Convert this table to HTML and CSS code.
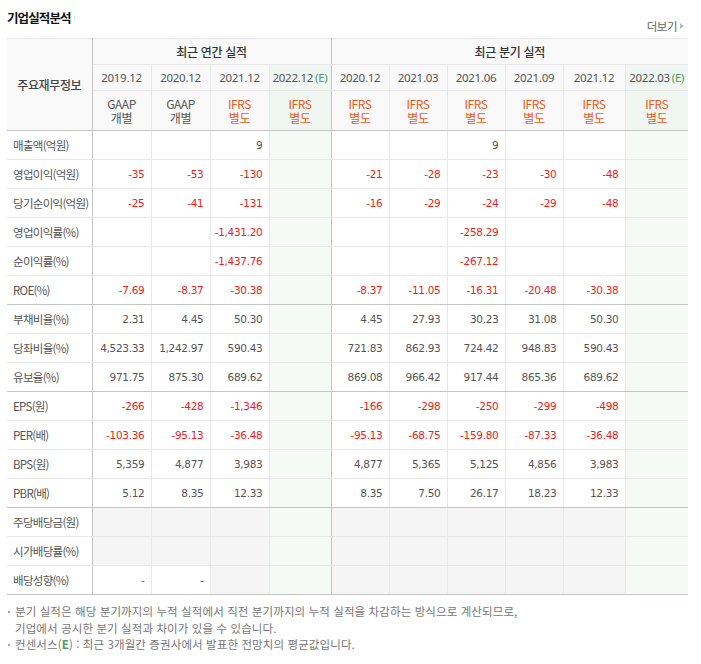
FILE: index.html
```html
<!DOCTYPE html>
<html lang="ko">
<head>
<meta charset="utf-8">
<link rel="stylesheet" href="styles.css">
</head>
<body>
<div class="wrap">
  <div class="top">
    <h2 class="title">기업실적분석<span class="bar"></span></h2>
    <a class="more">더보기<span class="tri"></span></a>
  </div>
  <table class="fin">
    <colgroup>
      <col class="w-label"><col class="w59"><col class="w59"><col class="w59"><col class="w62">
      <col class="w58"><col class="w58"><col class="w58"><col class="w58"><col class="w62"><col class="w63">
    </colgroup>
    <thead>
      <tr class="h1">
        <th rowspan="3" class="lab-h dr">주요재무정보</th>
        <th colspan="4" class="grp dr">최근 연간 실적</th>
        <th colspan="6" class="grp">최근 분기 실적</th>
      </tr>
      <tr class="h2">
        <th>2019.12</th><th>2020.12</th><th>2021.12</th><th class="est dr">2022.12<em>(E)</em></th>
        <th>2020.12</th><th>2021.03</th><th>2021.06</th><th>2021.09</th><th>2021.12</th><th class="est">2022.03<em>(E)</em></th>
      </tr>
      <tr class="h3">
        <th><span class="l">GAAP</span><span class="l">개별</span></th>
        <th><span class="l">GAAP</span><span class="l">개별</span></th>
        <th class="ifrs"><span class="l">IFRS</span><span class="l">별도</span></th>
        <th class="ifrs est dr"><span class="l">IFRS</span><span class="l">별도</span></th>
        <th class="ifrs"><span class="l">IFRS</span><span class="l">별도</span></th>
        <th class="ifrs"><span class="l">IFRS</span><span class="l">별도</span></th>
        <th class="ifrs"><span class="l">IFRS</span><span class="l">별도</span></th>
        <th class="ifrs"><span class="l">IFRS</span><span class="l">별도</span></th>
        <th class="ifrs"><span class="l">IFRS</span><span class="l">별도</span></th>
        <th class="ifrs est"><span class="l">IFRS</span><span class="l">별도</span></th>
      </tr>
    </thead>
    <tbody>
      <tr><th>매출액(억원)</th><td></td><td></td><td>9</td><td class="est dr"></td><td></td><td></td><td>9</td><td></td><td></td><td class="est"></td></tr>
      <tr><th>영업이익(억원)</th><td class="neg">-35</td><td class="neg">-53</td><td class="neg">-130</td><td class="est dr"></td><td class="neg">-21</td><td class="neg">-28</td><td class="neg">-23</td><td class="neg">-30</td><td class="neg">-48</td><td class="est"></td></tr>
      <tr><th>당기순이익(억원)</th><td class="neg">-25</td><td class="neg">-41</td><td class="neg">-131</td><td class="est dr"></td><td class="neg">-16</td><td class="neg">-29</td><td class="neg">-24</td><td class="neg">-29</td><td class="neg">-48</td><td class="est"></td></tr>
      <tr><th>영업이익률(%)</th><td></td><td></td><td class="neg">-1,431.20</td><td class="est dr"></td><td></td><td></td><td class="neg">-258.29</td><td></td><td></td><td class="est"></td></tr>
      <tr><th>순이익률(%)</th><td></td><td></td><td class="neg">-1,437.76</td><td class="est dr"></td><td></td><td></td><td class="neg">-267.12</td><td></td><td></td><td class="est"></td></tr>
      <tr class="end"><th>ROE(%)</th><td class="neg">-7.69</td><td class="neg">-8.37</td><td class="neg">-30.38</td><td class="est dr"></td><td class="neg">-8.37</td><td class="neg">-11.05</td><td class="neg">-16.31</td><td class="neg">-20.48</td><td class="neg">-30.38</td><td class="est"></td></tr>
      <tr><th>부채비율(%)</th><td>2.31</td><td>4.45</td><td>50.30</td><td class="est dr"></td><td>4.45</td><td>27.93</td><td>30.23</td><td>31.08</td><td>50.30</td><td class="est"></td></tr>
      <tr><th>당좌비율(%)</th><td>4,523.33</td><td>1,242.97</td><td>590.43</td><td class="est dr"></td><td>721.83</td><td>862.93</td><td>724.42</td><td>948.83</td><td>590.43</td><td class="est"></td></tr>
      <tr class="end"><th>유보율(%)</th><td>971.75</td><td>875.30</td><td>689.62</td><td class="est dr"></td><td>869.08</td><td>966.42</td><td>917.44</td><td>865.36</td><td>689.62</td><td class="est"></td></tr>
      <tr><th>EPS(원)</th><td class="neg">-266</td><td class="neg">-428</td><td class="neg">-1,346</td><td class="est dr"></td><td class="neg">-166</td><td class="neg">-298</td><td class="neg">-250</td><td class="neg">-299</td><td class="neg">-498</td><td class="est"></td></tr>
      <tr><th>PER(배)</th><td class="neg">-103.36</td><td class="neg">-95.13</td><td class="neg">-36.48</td><td class="est dr"></td><td class="neg">-95.13</td><td class="neg">-68.75</td><td class="neg">-159.80</td><td class="neg">-87.33</td><td class="neg">-36.48</td><td class="est"></td></tr>
      <tr><th>BPS(원)</th><td>5,359</td><td>4,877</td><td>3,983</td><td class="est dr"></td><td>4,877</td><td>5,365</td><td>5,125</td><td>4,856</td><td>3,983</td><td class="est"></td></tr>
      <tr class="end"><th>PBR(배)</th><td>5.12</td><td>8.35</td><td>12.33</td><td class="est dr"></td><td>8.35</td><td>7.50</td><td>26.17</td><td>18.23</td><td>12.33</td><td class="est"></td></tr>
      <tr class="div"><th>주당배당금(원)</th><td></td><td></td><td></td><td class="est dr"></td><td></td><td></td><td></td><td></td><td></td><td class="est"></td></tr>
      <tr class="div"><th>시가배당률(%)</th><td></td><td></td><td></td><td class="est dr"></td><td></td><td></td><td></td><td></td><td></td><td class="est"></td></tr>
      <tr class="div end"><th>배당성향(%)</th><td class="wh">-</td><td class="wh">-</td><td></td><td class="est dr"></td><td></td><td></td><td></td><td></td><td></td><td class="est"></td></tr>
    </tbody>
  </table>
  <ul class="notes">
    <li>분기 실적은 해당 분기까지의 누적 실적에서 직전 분기까지의 누적 실적을 차감하는 방식으로 계산되므로,<br>기업에서 공시한 분기 실적과 차이가 있을 수 있습니다.</li>
    <li>컨센서스(<b>E</b>) : 최근 3개월간 증권사에서 발표한 전망치의 평균값입니다.</li>
  </ul>
</div>
</body>
</html>
```
FILE: styles.css
```css
* { box-sizing: border-box; }
body { margin: 0; background: #fff; font-family: "Noto Sans CJK KR", "Noto Sans", sans-serif; color: #333; }
.wrap { padding: 0 13px 0 7px; width: 701px; }
.top { display: flex; justify-content: space-between; align-items: flex-end; height: 38px; padding-bottom: 5px; }
.title { margin: 0 0 7px 0; font-size: 12.5px; font-weight: 700; color: #111; letter-spacing: -0.9px; display: flex; align-items: center; line-height: 16px; }
.title .bar { display: inline-block; width: 1px; height: 7px; background: #e4e4e4; margin-left: 3px; }
.more { font-size: 11.5px; color: #666; letter-spacing: -0.5px; display: flex; align-items: center; line-height: 14px; margin-right: 4px; }
.more .tri { display: inline-block; width: 0; height: 0; border-left: 4px solid #bbb; border-top: 3px solid transparent; border-bottom: 3px solid transparent; margin-left: 3px; }

.fin { border-collapse: collapse; table-layout: fixed; width: 681px; border-top: 1px solid #c4c4c4; border-bottom: 1px solid #c4c4c4; }
.w-label { width: 85px; }
.w59 { width: 59px; }
.w62 { width: 62px; }
.w58 { width: 58px; }
.w63 { width: 63px; }

.fin th, .fin td { border: 1px solid #e8e8e8; padding: 0; font-weight: 400; }
.fin tr > :first-child { border-left: none; }
.fin tr > :last-child { border-right: none; }
.fin thead th { background: #f9f9f9; text-align: center; color: #444; font-size: 11.5px; letter-spacing: -0.4px; }
.fin thead .h1 th { height: 26px; }
.fin thead .h1 .grp { font-size: 12px; color: #333; font-weight: 500; letter-spacing: -0.3px; }
.fin thead .h2 th { height: 26px; font-family: "Noto Sans", sans-serif; color: #555; font-size: 11.5px; letter-spacing: -0.3px; }
.fin thead .h2 em { font-style: normal; color: #4f9a5d; margin-left: 2px; }
.fin thead .h3 th { height: 40px; color: #555; font-size: 12px; border-bottom: 1px solid #c4c4c4; }
.fin thead .h3 .l { display: block; line-height: 14px; }
.fin thead .h3 th.ifrs { color: #ec5a24; }
.fin thead .lab-h { color: #444; font-size: 12px; font-weight: 500; border-bottom: 1px solid #c4c4c4; }
.fin thead th.est { background: #f0f6f1; }

.fin .dr { border-right: 1px solid #c4c4c4; }
.fin tbody th { text-align: left; padding-left: 6px; height: 29px; color: #555; font-size: 11.5px; letter-spacing: -0.7px; border-right: 1px solid #c4c4c4; white-space: nowrap; }
.fin tbody td { text-align: right; padding-right: 6px; height: 29px; color: #555; font-family: "DejaVu Sans", sans-serif; font-size: 10.5px; letter-spacing: -0.3px; }
.fin tbody td.neg { color: #f21a1a; }
.fin tbody td.est { background: #f5faf6; }
.fin tbody tr.end > * { border-bottom: 1px solid #c4c4c4; }
.fin tbody tr.div td { background: #f5f5f5; }
.fin tbody tr.div td.est { background: #f5faf6; }
.fin tbody tr.div td.wh { background: #fff; }

.notes { list-style: none; margin: 8px 0 0 0; padding: 0; font-size: 11.5px; line-height: 16.5px; color: #777; letter-spacing: 0.1px; }
.notes li { position: relative; padding-left: 8px; }
.notes li::before { content: ""; position: absolute; left: 1px; top: 8px; width: 2px; height: 2px; background: #aaa; }
.notes b { color: #4f9a5d; font-weight: 700; }
```
